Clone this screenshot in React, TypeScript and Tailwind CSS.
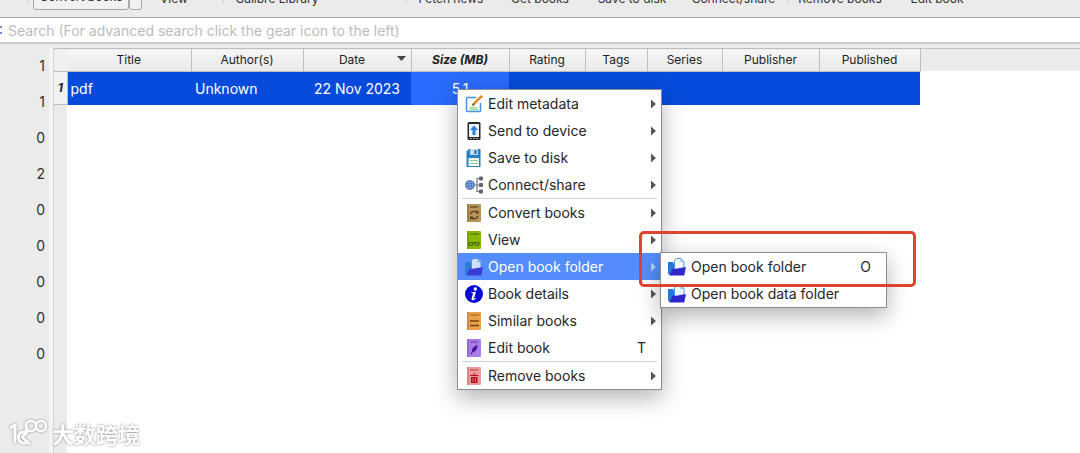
import type { ReactNode } from 'react';

type Item = {
  label: string;
  icon: ReactNode;
  shortcut?: string;
  submenu?: boolean;
  active?: boolean;
  divider?: boolean;
};

const counts = [1, 1, 0, 2, 0, 0, 0, 0, 0];

const columns = [
  { label: 'Title', width: 'w-[124px]' },
  { label: 'Author(s)', width: 'w-[112px]' },
  { label: 'Date', width: 'w-[108px]', sorted: true },
  { label: 'Size (MB)', width: 'w-[98px]', current: true },
  { label: 'Rating', width: 'w-[76px]' },
  { label: 'Tags', width: 'w-[62px]' },
  { label: 'Series', width: 'w-[75px]' },
  { label: 'Publisher', width: 'w-[97px]' },
  { label: 'Published', width: 'w-[101px]' },
];

function EditIcon() {
  return (
    <svg viewBox="0 0 18 18" className="size-[18px]">
      <path d="M11 2.5H2.5a1 1 0 0 0-1 1v12a1 1 0 0 0 1 1h12a1 1 0 0 0 1-1V8" fill="none" stroke="#4a8fe0" strokeWidth="1.5" />
      <path d="M4.500 14.500h9M4.500 12.500h8" stroke="#8fdc9a" strokeWidth="1.300" />
      <path d="M7 11l1-3 8-8 2 1.500-8 8z" fill="#e08a25" />
      <path d="M7 11l1-3 2 1.500z" fill="#6b4a2a" />
    </svg>
  );
}

function DeviceIcon() {
  return (
    <svg viewBox="0 0 18 18" className="size-[18px]">
      <rect x="2.500" y="0" width="13" height="18" rx="1.500" fill="#26282c" />
      <rect x="4" y="2" width="10" height="13" fill="#edf3fb" />
      <path d="M9 3.500l4 4.500h-2.500v5h-3V8H5z" fill="#2f7be0" />
      <path d="M5 16.500h2M8 16.500h2M11 16.500h2" stroke="#aaa" strokeWidth="1" />
    </svg>
  );
}

function DiskIcon() {
  return (
    <svg viewBox="0 0 18 18" className="size-[18px]">
      <path d="M4 0h11.500v18H2.500a1 1 0 0 1-1-1V2.500z" fill="#2b7fc4" />
      <rect x="5" y="0" width="8" height="6" fill="#b9dcf2" />
      <rect x="9.500" y="1" width="2" height="4" fill="#2b6ca8" />
      <rect x="3.500" y="9" width="10.500" height="8" fill="#f2faf3" />
      <path d="M4.500 11.500h8.500M4.500 14.500h8.500" stroke="#8fd09a" strokeWidth="1" />
    </svg>
  );
}

function ShareIcon() {
  return (
    <svg viewBox="0 0 18 18" className="size-[18px]">
      <circle cx="5" cy="9" r="4.800" fill="#3a66b8" />
      <path d="M1 9h8M5 4.500v9M2 6.500h6M2 11.500h6M3 5.500c-1 2-1 5 0 7M7 5.500c1 2 1 5 0 7" stroke="#a9c4ef" strokeWidth="0.600" fill="none" />
      <path d="M10 9h5M15 2.500h-3v13h3" stroke="#777" strokeWidth="1.200" fill="none" />
      <rect x="14" y="0.500" width="4" height="4" rx="1" fill="#63666a" />
      <rect x="14" y="7" width="4" height="4" rx="1" fill="#63666a" />
      <rect x="14" y="13.500" width="4" height="4" rx="1" fill="#63666a" />
    </svg>
  );
}

function ConvertIcon() {
  return (
    <svg viewBox="0 0 18 18" className="size-[18px]">
      <rect x="2" y="0" width="14" height="18" rx="1" fill="#b8935c" />
      <rect x="2" y="0" width="2" height="18" fill="#a47f4b" />
      <path d="M5 3h8" stroke="#5b4322" strokeWidth="1.200" />
      <path d="M5.500 10a4 3.500 0 0 1 7-1.500M13 12a4 3.500 0 0 1-7 1.500" stroke="#55401f" strokeWidth="1.400" fill="none" />
      <path d="M13.500 6v3.500H10zM5 16v-3.500h3.500z" fill="#55401f" />
    </svg>
  );
}

function ViewIcon() {
  return (
    <svg viewBox="0 0 18 18" className="size-[18px]">
      <rect x="2" y="0" width="14" height="18" rx="1" fill="#8ab800" />
      <rect x="2" y="0" width="2" height="18" fill="#79a300" />
      <path d="M5 3h9" stroke="#4d6b00" strokeWidth="1.200" />
      <path d="M3.500 11.500h11M4 11.500c0 4 4 4 4.500 0M9.500 11.500c.5 4 4.500 4 4.500 0" stroke="#46620a" strokeWidth="1.200" fill="none" />
    </svg>
  );
}

function FolderIcon() {
  return (
    <svg viewBox="0 0 18 18" className="size-[18px]">
      <path d="M0 4h5l1 2h3v11H1L0 15z" fill="#2878cf" />
      <path d="M6.500 12V2.500l2-2h4.500l3 3V12z" fill="#f0f6ff" stroke="#4f93e6" strokeWidth="1" />
      <path d="M12.500 0.500v3.500h3.500z" fill="#8fbdf4" />
      <path d="M4.500 10.500c5 .8 8-.8 13.500-1.200l-1.800 8.200H1.500z" fill="#3027cf" />
    </svg>
  );
}

function InfoIcon() {
  return (
    <svg viewBox="0 0 18 18" className="size-[18px]">
      <circle cx="9" cy="9" r="9" fill="#0a0ad6" />
      <circle cx="10.300" cy="4" r="1.700" fill="#fff" />
      <path d="M6 7.500l5-.8-2 6.500c-.2.8.5.7 1.800-.5l.4.500c-2 2.500-5.200 2.700-4.600.2l1.300-4.700c.2-.7-.5-.7-1.900-.7z" fill="#fff" />
    </svg>
  );
}

function SimilarIcon() {
  return (
    <svg viewBox="0 0 18 18" className="size-[18px]">
      <rect x="2" y="0" width="14" height="18" rx="1" fill="#eda04a" />
      <rect x="2" y="0" width="2" height="18" fill="#d98b35" />
      <path d="M5 3h9" stroke="#9a5d18" strokeWidth="1" />
      <path d="M5 9h9M5 13.500h9" stroke="#6f4310" strokeWidth="1.500" />
    </svg>
  );
}

function QuillIcon() {
  return (
    <svg viewBox="0 0 18 18" className="size-[18px]">
      <rect x="2" y="0" width="14" height="18" rx="1" fill="#a97de4" />
      <rect x="2" y="0" width="2" height="18" fill="#9769d6" />
      <path d="M5 3h8" stroke="#6a35b4" strokeWidth="1" />
      <path d="M12.500 6c-4 1.500-6 4-5.500 6.500L5.500 15l.8.400L8 13c3-.5 4.500-3.500 4.500-7z" fill="#4c12a1" />
    </svg>
  );
}

function TrashIcon() {
  return (
    <svg viewBox="0 0 18 18" className="size-[18px]">
      <rect x="2" y="0" width="14" height="18" rx="1" fill="#e89a9c" />
      <rect x="2" y="0" width="2" height="18" fill="#d98386" />
      <path d="M5 3h8" stroke="#b83a40" strokeWidth="1" />
      <path d="M5 8.500h8.500M8 7h2.500" stroke="#b3121c" strokeWidth="1.200" />
      <path d="M6 10h6.500v6H6z" fill="#b3121c" />
      <path d="M8 11v4M10.500 11v4" stroke="#e89a9c" strokeWidth="0.700" />
    </svg>
  );
}

const bookMenu: Item[] = [
  { label: 'Edit metadata', icon: <EditIcon />, submenu: true },
  { label: 'Send to device', icon: <DeviceIcon />, submenu: true },
  { label: 'Save to disk', icon: <DiskIcon />, submenu: true },
  { label: 'Connect/share', icon: <ShareIcon />, submenu: true },
  { label: 'Convert books', icon: <ConvertIcon />, submenu: true, divider: true },
  { label: 'View', icon: <ViewIcon />, submenu: true },
  { label: 'Open book folder', icon: <FolderIcon />, submenu: true, active: true },
  { label: 'Book details', icon: <InfoIcon />, submenu: true },
  { label: 'Similar books', icon: <SimilarIcon />, submenu: true },
  { label: 'Edit book', icon: <QuillIcon />, shortcut: 'T' },
  { label: 'Remove books', icon: <TrashIcon />, submenu: true, divider: true },
];

const folderMenu: Item[] = [
  { label: 'Open book folder', icon: <FolderIcon />, shortcut: 'O' },
  { label: 'Open book data folder', icon: <FolderIcon /> },
];

function MenuItem({ item }: { item: Item }) {
  return (
    <>
      {item.divider && <div role="separator" className="mx-1 h-px bg-[#d0d0d0]" />}
      <button
        role="menuitem"
        className={`flex h-[27px] w-full items-center gap-[5px] pl-[7px] pr-[5px] text-left ${
          item.active ? 'bg-[#548dfb] text-white' : 'text-[#262626]'
        }`}
      >
        <span className={item.active ? 'shrink-0 opacity-80' : 'shrink-0'}>{item.icon}</span>
        <span className="flex-1 whitespace-nowrap">{item.label}</span>
        {item.shortcut && <span className="pr-[10px]">{item.shortcut}</span>}
        {item.submenu && (
          <svg viewBox="0 0 5 10" className={`h-[10px] w-[5px] ${item.active ? 'text-[#b5d0ff]' : 'text-[#555]'}`}>
            <path d="M0 0.500L5 5 0 9.500z" fill="currentColor" />
          </svg>
        )}
      </button>
    </>
  );
}

function Toolbar() {
  return (
    <header className="h-[18px] overflow-hidden border-b border-[#a9a9a9]">
      <div className="flex h-[17px] items-end pb-[7px] text-[12px] leading-[16px] *:shrink-0">
        <div className="mr-[5px] ml-[27px] h-[3px] w-px self-start bg-[#d0d0d0]" />
        <button className="h-[22px] w-[96px] rounded-[3px] border border-[#a8a8a8] bg-[#f1f1f1] pb-[4px]">Convert books</button>
        <button aria-label="Convert options" className="h-[22px] w-[13px] rounded-[3px] border border-[#a8a8a8] bg-[#f1f1f1]" />
        <button className="w-[64px] pb-[3px]">View</button>
        <div className="ml-[17px] h-[3px] w-px self-start bg-[#d0d0d0]" />
        <button className="w-[106px] pb-[3px]">Calibre Library</button>
        <div className="ml-[76px] h-[3px] w-px self-start bg-[#d0d0d0]" />
        <button className="w-[88px] pb-[3px]">Fetch news</button>
        <button className="w-[90px] pb-[3px]">Get books</button>
        <button className="w-[94px] pb-[3px]">Save to disk</button>
        <button className="w-[109px] pb-[3px]">Connect/share</button>
        <div className="h-[3px] w-px self-start bg-[#d0d0d0]" />
        <button className="w-[102px] pb-[3px]">Remove books</button>
        <button className="w-[92px] pb-[3px]">Edit book</button>
      </div>
    </header>
  );
}

function BookTable() {
  return (
    <div className="flex flex-1 flex-col bg-white">
      <div className="h-[23px] border-t border-[#c4c4c4] bg-[#ebebeb]" />
      <table className="-mt-[23px] table-fixed border-collapse self-start">
        <thead>
          <tr className="h-[23px] text-[12px] text-[#222]">
            <th aria-label="Row" className="w-[13px] border-y border-[#bdbdbd] bg-[#f0f0f0] p-0" />
            {columns.map((col) => (
              <th
                key={col.label}
                className={`${col.width} border-y border-r border-[#bdbdbd] bg-linear-to-b from-[#f6f6f6] to-[#e9e9e9] p-0 ${
                  col.current ? 'font-bold italic' : 'font-normal'
                }`}
              >
                <div className="flex items-center">
                  {col.sorted && <span className="w-[4px]" />}
                  <span className="flex-1">{col.label}</span>
                  {col.sorted && (
                    <svg viewBox="0 0 9 5" className="mr-[5px] mb-1 h-[5px] w-[9px]">
                      <path d="M0 0h9L4.500 5z" fill="#444" />
                    </svg>
                  )}
                </div>
              </th>
            ))}
          </tr>
        </thead>
        <tbody>
          <tr className="h-[33px] bg-[#064bdb] text-[14px] text-white">
            <th className="border-r border-b border-[#bdbdbd] bg-[#f1f1f1] p-0 text-[12px] font-bold italic text-[#222]">1</th>
            <td className="p-0 pl-[3px]">pdf</td>
            <td className="p-0 pl-[4px]">Unknown</td>
            <td className="p-0 text-center">22 Nov 2023</td>
            <td className="bg-[#296bfc] p-0 text-center">5.1</td>
            <td />
            <td />
            <td />
            <td />
            <td />
          </tr>
        </tbody>
      </table>
      {/* Empty part of the row header */}
      <div className="w-[13px] flex-1 bg-[#ebebeb]" />
    </div>
  );
}

function Watermark() {
  return (
    <div className="absolute bottom-[6px] left-[9px] flex items-center gap-[4px] text-white drop-shadow-[0_0_1px_#888]">
      <svg viewBox="0 0 39 28" className="h-[28px] w-[39px]" fill="none" stroke="currentColor" strokeLinecap="round" strokeLinejoin="round">
        <path d="M2 8.500L6 6v17" strokeWidth="3" />
        <path d="M16 13.500c-5-1.500-7 2-6.500 5.500.6 5 6 6.500 9.500 4M18 13l-5 5 7 6.500" strokeWidth="3" />
        <circle cx="22" cy="7" r="5" strokeWidth="2.500" />
        <circle cx="32" cy="7" r="5" strokeWidth="2.500" />
        <path d="M17 4v9" strokeWidth="2.500" />
      </svg>
      <span className="font-['Noto_Sans_CJK_SC',sans-serif] text-[22px] font-bold leading-[28px]">大数跨境</span>
    </div>
  );
}

export default function App() {
  return (
    <div className="relative flex min-h-screen flex-col overflow-hidden bg-[#ebebeb] font-['Inter',sans-serif] text-[#303030]">
      <Toolbar />

      {/* Search bar */}
      <div className="flex h-[26px] items-center border-b-2 border-[#c8c8c8] bg-white">
        <svg viewBox="0 0 2 8" className="h-[8px] w-[2px]">
          <path d="M0 0h2v2H0zM0 6h2v2H0z" fill="#6f8fd0" />
        </svg>
        <input
          aria-label="Search"
          placeholder="Search (For advanced search click the gear icon to the left)"
          className="ml-[6px] h-full flex-1 bg-transparent text-[14px] outline-none placeholder:text-[#bcbcbc]"
        />
      </div>

      <main className="flex flex-1 pt-[4px]">
        {/* Category counts */}
        <aside className="w-[54px] border-r border-[#d4d4d4]">
          <ul className="h-full border-r-4 border-[#f4f4f4] pr-[4px] text-right text-[14px]">
            {counts.map((count, i) => (
              <li key={i} className="h-9 leading-9">
                {count}
              </li>
            ))}
          </ul>
        </aside>
        <BookTable />
      </main>

      {/* Context menu */}
      <div
        role="menu"
        className="absolute top-[89px] left-[457px] w-[205px] border border-[#8e8e8e] bg-white text-[14px] shadow-[0_8px_22px_rgba(0,0,0,0.3)]"
      >
        {bookMenu.map((item) => (
          <MenuItem key={item.label} item={item} />
        ))}
      </div>

      <div
        role="menu"
        className="absolute top-[252px] left-[660px] w-[227px] border border-[#8e8e8e] bg-white text-[14px] shadow-[0_8px_22px_rgba(0,0,0,0.3)]"
      >
        {folderMenu.map((item) => (
          <MenuItem key={item.label} item={item} />
        ))}
      </div>

      {/* Highlight frame */}
      <div className="pointer-events-none absolute top-[231px] left-[639px] h-[56px] w-[277px] rounded-[5px] border-3 border-[#dc4430]" />

      <Watermark />
    </div>
  );
}
